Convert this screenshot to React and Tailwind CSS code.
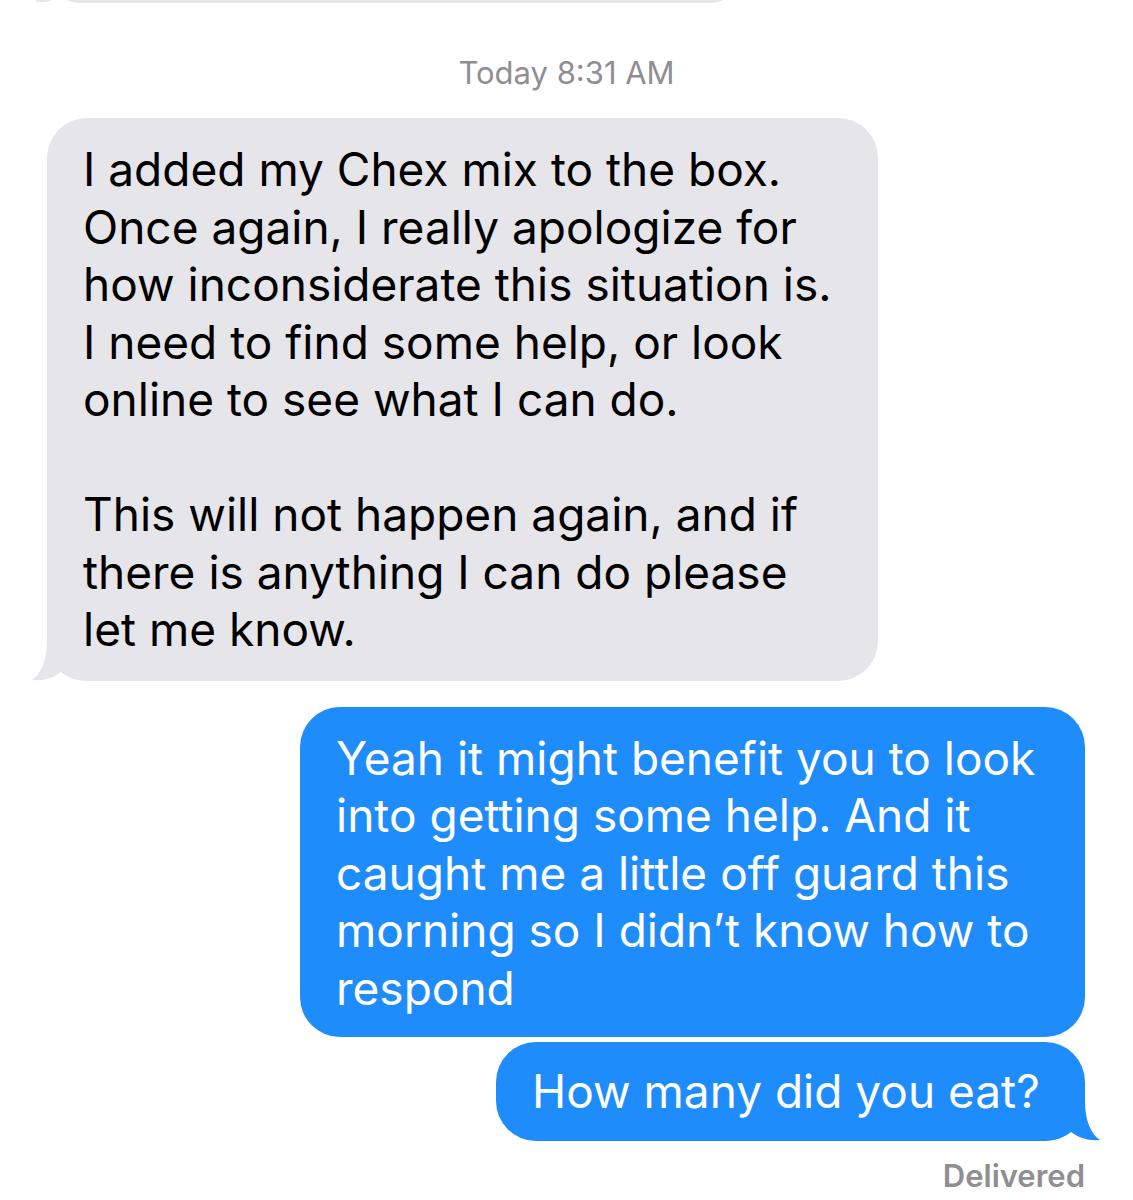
import React from "react";

const font = { fontFamily: "Inter, 'Helvetica Neue', Arial, sans-serif" };

function LeftTail({ color }) {
  return (
    <svg
      className="absolute -left-[16px] bottom-0"
      width="60"
      height="40"
      viewBox="0 0 60 40"
    >
      <path
        d="M16 0 C16 20 10 33 1 39 C12 40 22 37 30 31 C36 36 46 40 60 40 L60 0 Z"
        fill={color}
      />
    </svg>
  );
}

function RightTail({ color }) {
  return (
    <svg
      className="absolute -right-[16px] bottom-0"
      width="60"
      height="40"
      viewBox="0 0 60 40"
    >
      <path
        d="M44 0 C44 20 50 33 59 39 C48 40 38 37 30 31 C24 36 14 40 0 40 L0 0 Z"
        fill={color}
      />
    </svg>
  );
}

function Bubble({ side, tail, children, className = "" }) {
  const mine = side === "right";
  return (
    <div className={`flex ${mine ? "justify-end" : "justify-start"}`}>
      <div
        className={`relative rounded-[40px] px-[36px] text-[46px] leading-[57.5px] ${
          mine ? "bg-[#1f8cfb] text-white" : "bg-[#e5e5ea] text-black"
        } ${className}`}
      >
        {tail && (mine ? <RightTail color="#1f8cfb" /> : <LeftTail color="#e5e5ea" />)}
        <div className="relative">{children}</div>
      </div>
    </div>
  );
}

export default function App() {
  return (
    <div className="w-[1133px] h-[1200px] bg-white overflow-hidden" style={font}>
      {/* bottom of the previous message */}
      <div className="px-[50px]">
        <Bubble side="left" tail className="w-[690px] h-[60px] -mt-[57px]" />
      </div>

      <div className="pt-[52px] text-center text-[31px] leading-[36px] text-[#8e8e93]">
        Today 8:31 AM
      </div>

      <div className="pt-[27px] px-[47px] pr-[48px] flex flex-col">
        <Bubble side="left" tail className="w-[831px] pt-[23px] pb-[22px]">
          I added my Chex mix to the box.
          <br />
          Once again, I really apologize for
          <br />
          how inconsiderate this situation is.
          <br />I need to find some help, or look
          <br />
          online to see what I can do.
          <br />
          <br />
          This will not happen again, and if
          <br />
          there is anything I can do please
          <br />
          let me know.
        </Bubble>

        <div className="h-[26px]" />

        <Bubble side="right" className="w-[785px] pt-[23px] pb-[20px]">
          Yeah it might benefit you to look
          <br />
          into getting some help. And it
          <br />
          caught me a little off guard this
          <br />
          morning so I didn&rsquo;t know how to
          <br />
          respond
        </Bubble>

        <div className="h-[5px]" />

        <Bubble side="right" tail className="w-[589px] pt-[21px] pb-[20px]">
          How many did you eat?
        </Bubble>

        <div className="pt-[17px] text-right text-[31px] leading-[36px] font-semibold text-[#8e8e93]">
          Delivered
        </div>
      </div>
    </div>
  );
}
